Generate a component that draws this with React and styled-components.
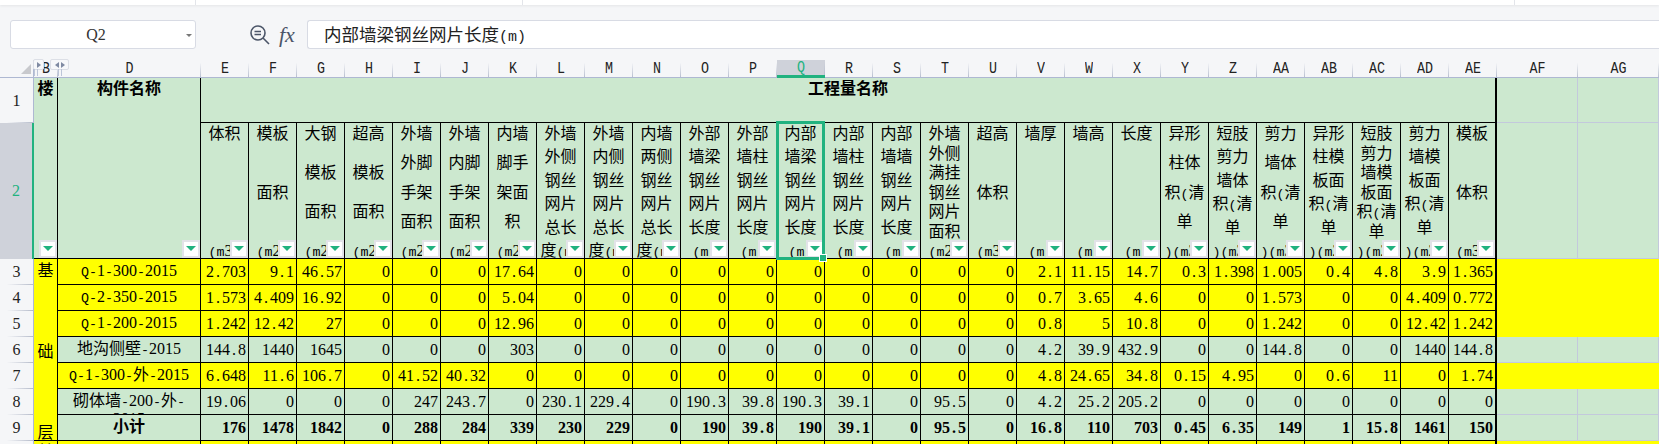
import React from 'react';
import styled, { createGlobalStyle } from 'styled-components';

const Global = createGlobalStyle`
    html, body {
        margin: 0;
        padding: 0;
        height: 444px;
        overflow: hidden;
        background: #f5f6f8;
    }
`;

const CJK = '"Noto Sans CJK SC", "Noto Sans", sans-serif';
const MONO = '"Liberation Mono", monospace';
const SERIF = '"Liberation Serif", serif';
const GREEN = '#cce8cf';
const ACTIVE = '#21b27f';

const Latin = styled.span`
    font: ${p => (p.$bold ? 700 : 400)} 13.33px/1 ${MONO};
`;
const Page = styled.div`
    width: 1659px;
    height: 444px;
    overflow: hidden;
`;
const TopStrip = styled.div`
    display: flex;
    height: 5px;
    background: #fff;
    box-shadow: 0 1px 3px rgba(0, 0, 0, 0.07);
`;
const Tick = styled.i`
    display: block;
    width: 1px;
    height: 5px;
    background: #e3e5ea;
    margin-left: ${p => p.$gap}px;
`;
const FormulaBar = styled.div`
    display: flex;
    align-items: center;
    height: 29px;
    padding: 15px 0 11px 10px;
`;
const NameBox = styled.div`
    position: relative;
    box-sizing: border-box;
    width: 186px;
    height: 29px;
    background: #fff;
    border: 1px solid #d8dbe4;
    border-radius: 3px;
    font: 16px/27px ${SERIF};
    color: #333;
    text-align: center;
    padding-right: 14px;
    &::after {
        content: '';
        position: absolute;
        right: 3px;
        top: 13px;
        border-left: 3px solid transparent;
        border-right: 3px solid transparent;
        border-top: 3px solid #777;
    }
`;
const BarIcons = styled.div`
    display: flex;
    align-items: center;
    width: 111px;
    padding-left: 54px;
    box-sizing: border-box;
    gap: 9px;
    color: #4b5568;
`;
const Fx = styled.span`
    font: italic 22px/28px ${SERIF};
`;
const FormulaInput = styled.div`
    flex: 1;
    box-sizing: border-box;
    height: 29px;
    background: #fff;
    border: 1px solid #d8dbe4;
    border-right: none;
    border-radius: 3px 0 0 3px;
    padding-left: 16px;
    font: 17.5px/26px ${CJK};
    color: #222;
    ${Latin} {
        font-size: 15px;
    }
`;

const Sheet = styled.table`
    border-collapse: separate;
    border-spacing: 0;
    table-layout: fixed;
    width: 1659px;
    font: 16px/18px ${CJK};
    color: #000;
`;
const Col = styled.col`
    width: ${p => p.$w}px;
`;
const Row = styled.tr`
    height: ${p => p.$h}px;
`;
const ColHead = styled.th`
    position: relative;
    height: 17px;
    padding: 0;
    background-color: ${p => (p.$active ? '#cfd2da' : '#f5f6f8')};
    background-image: linear-gradient(to bottom, transparent 15%, #b9c0d0);
    background-size: 1px 100%;
    background-position: right top;
    background-repeat: no-repeat;
    color: ${p => (p.$active ? ACTIVE : '#222')};
    border-bottom: ${p => (p.$active ? `3px solid ${ACTIVE}` : '1px solid #aeb8d2')};
    box-sizing: border-box;
    font: 400 13.33px/14px ${MONO};
`;
const ColLabel = styled.span`
    display: inline-block;
    vertical-align: top;
    font: 400 13.33px/15px ${MONO};
    transform: scaleY(1.18);
`;
const Corner = styled.th`
    position: relative;
    padding: 0;
    background: #f5f6f8;
    border-bottom: 1px solid #aeb8d2;
    border-right: 1px solid #aeb8d2;
    box-sizing: border-box;
    font: 400 13.33px/14px ${MONO};
    &::after {
        content: '';
        position: absolute;
        right: 2px;
        bottom: 3px;
        border-left: 10px solid transparent;
        border-bottom: 10px solid #c8c9cd;
    }
`;
const RowHead = styled.th`
    padding: 0;
    background-color: ${p => (p.$active ? '#cfd2da' : '#f5f6f8')};
    background-image: ${p => (p.$active ? 'none' : 'linear-gradient(to right, transparent 20%, #b6bccb)')};
    background-size: 100% 1px;
    background-position: left bottom;
    background-repeat: no-repeat;
    color: ${p => (p.$active ? ACTIVE : '#222')};
    border-right: ${p => (p.$active ? `2px solid ${ACTIVE}` : '1px solid #aeb8d2')};
    font: 400 16px/16px ${SERIF};
    box-sizing: border-box;
`;
const Cell = styled.td`
    position: relative;
    box-sizing: border-box;
    padding: 0;
    background: ${p => (p.$fill === 'yellow' ? '#ffff00' : GREEN)};
    border-right: ${p => (p.$thick ? '2px' : '1px')} solid #000;
    border-bottom: 1px solid #000;
    vertical-align: top;
    overflow: ${p => (p.$open ? 'visible' : 'hidden')};
`;
const Blank = styled.td`
    padding: 0;
    box-sizing: border-box;
    background: ${p => (p.$fill === 'yellow' ? '#ffff00' : GREEN)};
    border-right: 1px solid ${p => (p.$fill === 'yellow' ? '#ffff00' : '#c3c9dc')};
    border-bottom: 1px solid ${p => (p.$fill === 'yellow' ? '#ffff00' : '#c3c9dc')};
`;
const TopLabel = styled.div`
    font-weight: ${p => (p.$plain ? 400 : 700)};
    text-align: center;
    line-height: 18px;
    white-space: nowrap;
`;
const HeadStack = styled.div`
    display: flex;
    flex-direction: column;
    justify-content: space-between;
    align-items: center;
    height: 135px;
    white-space: nowrap;
    overflow: hidden;
`;
const HeadLine = styled.div`
    height: 18px;
    line-height: 18px;
    text-align: center;
`;
const Digits = styled.span`
    font: ${p => (p.$bold ? 700 : 400)} 16px/1 ${SERIF};
`;
const Dot = styled(Digits)`
    padding: 0 2px;
`;
const FilterBtn = styled.span`
    position: absolute;
    right: 0;
    bottom: 0;
    box-sizing: border-box;
    width: 18px;
    height: 18px;
    background: #fff;
    border: 2px solid #e2e3e8;
    z-index: 2;
    &::after {
        content: '';
        position: absolute;
        left: 2px;
        top: 4px;
        border-left: 5px solid transparent;
        border-right: 5px solid transparent;
        border-top: 5px solid ${ACTIVE};
    }
`;
const NameCell = styled.div`
    height: 25px;
    box-sizing: border-box;
    padding-top: 2px;
    overflow: hidden;
    text-align: center;
    font-size: 16px;
    font-weight: ${p => (p.$bold ? 700 : 400)};
    line-height: 17px;
`;
const Value = styled.div`
    height: 25px;
    box-sizing: border-box;
    padding: 2px 2px 0 0;
    overflow: hidden;
    text-align: right;
    line-height: 18px;
    white-space: nowrap;
`;
const FloorStack = styled.div`
    display: flex;
    flex-direction: column;
    justify-content: space-between;
    align-items: center;
    height: 181px;
    padding-top: 1px;
    box-sizing: border-box;
    line-height: 18px;
`;
const Selection = styled.div`
    position: absolute;
    left: -1px;
    top: -2px;
    right: -1px;
    bottom: -2px;
    border: 3px solid ${ACTIVE};
    pointer-events: none;
    z-index: 3;
    &::after {
        content: '';
        position: absolute;
        right: -5px;
        bottom: -5px;
        width: 6px;
        height: 6px;
        background: ${ACTIVE};
        border: 1px solid #fff;
    }
`;
const OutlineTab = styled.span`
    position: absolute;
    top: -1px;
    left: ${p => p.$left}px;
    display: flex;
    align-items: center;
    justify-content: center;
    gap: 2px;
    box-sizing: border-box;
    height: 11px;
    width: ${p => p.$width}px;
    background: #f7f8fa;
    border: 1px solid #dcdfe6;
    border-radius: 2px;
    z-index: 2;
    &::before,
    &::after {
        content: '';
        position: absolute;
        top: 100%;
        width: 1px;
        height: 7px;
        background: #bcc5d8;
    }
    &::before {
        left: ${p => p.$line}px;
    }
    &::after {
        left: ${p => p.$line + 3}px;
    }
`;
const Arrow = styled.i`
    display: block;
    border-top: 3px solid transparent;
    border-bottom: 3px solid transparent;
    ${p => (p.$dir === 'left' ? 'border-right' : 'border-left')}: 4px solid #7f8aa2;
`;

const cols = ['E','F','G','H','I','J','K','L','M','N','O','P','Q','R','S','T','U','V','W','X','Y','Z','AA','AB','AC','AD','AE'];

const heads = [
    ['体积','(m3)'],
    ['模板','面积','(m2)'],
    ['大钢','模板','面积','(m2)'],
    ['超高','模板','面积','(m2)'],
    ['外墙','外脚','手架','面积','(m2)'],
    ['外墙','内脚','手架','面积','(m2)'],
    ['内墙','脚手','架面','积','(m2)'],
    ['外墙','外侧','钢丝','网片','总长','度(m)'],
    ['外墙','内侧','钢丝','网片','总长','度(m)'],
    ['内墙','两侧','钢丝','网片','总长','度(m)'],
    ['外部','墙梁','钢丝','网片','长度','(m)'],
    ['外部','墙柱','钢丝','网片','长度','(m)'],
    ['内部','墙梁','钢丝','网片','长度','(m)'],
    ['内部','墙柱','钢丝','网片','长度','(m)'],
    ['内部','墙墙','钢丝','网片','长度','(m)'],
    ['外墙','外侧','满挂','钢丝','网片','面积','(m2)'],
    ['超高','体积','(m3)'],
    ['墙厚','(m)'],
    ['墙高','(m)'],
    ['长度','(m)'],
    ['异形','柱体','积(清','单',')(m3)'],
    ['短肢','剪力','墙体','积(清','单',')(m3)'],
    ['剪力','墙体','积(清','单',')(m3)'],
    ['异形','柱模','板面','积(清','单',')(m2)'],
    ['短肢','剪力','墙模','板面','积(清','单',')(m2)'],
    ['剪力','墙模','板面','积(清','单',')(m2)'],
    ['模板','体积','(m3)'],
];

const Z10 = Array(10).fill('0');

const rows = [
    { n: 3, fill: 'yellow', name: 'Q-1-300-2015', vals: ['2.703','9.1','46.57','0','0','0','17.64',...Z10,'2.1','11.15','14.7','0.3','1.398','1.005','0.4','4.8','3.9','1.365'] },
    { n: 4, fill: 'yellow', name: 'Q-2-350-2015', vals: ['1.573','4.409','16.92','0','0','0','5.04',...Z10,'0.7','3.65','4.6','0','0','1.573','0','0','4.409','0.772'] },
    { n: 5, fill: 'yellow', name: 'Q-1-200-2015', vals: ['1.242','12.42','27','0','0','0','12.96',...Z10,'0.8','5','10.8','0','0','1.242','0','0','12.42','1.242'] },
    { n: 6, fill: 'green', name: '地沟侧壁-2015', vals: ['144.8','1440','1645','0','0','0','303',...Z10,'4.2','39.9','432.9','0','0','144.8','0','0','1440','144.8'] },
    { n: 7, fill: 'yellow', name: 'Q-1-300-外-2015', vals: ['6.648','11.6','106.7','0','41.52','40.32','0',...Z10,'4.8','24.65','34.8','0.15','4.95','0','0.6','11','0','1.74'] },
    { n: 8, fill: 'green', name: '砌体墙-200-外-\n2015', vals: ['19.06','0','0','0','247','243.7','0','230.1','229.4','0','190.3','39.8','190.3','39.1','0','95.5','0','4.2','25.2','205.2','0','0','0','0','0','0','0'] },
    { n: 9, fill: 'green', bold: true, name: '小计', vals: ['176','1478','1842','0','288','284','339','230','229','0','190','39.8','190','39.1','0','95.5','0','16.8','110','703','0.45','6.35','149','1','15.8','1461','150'] },
];

// the sheet is in SimSun, so every latin char has to come out half the CJK width
function Mixed({ text, bold }) {
    const parts = text.match(/\n|[0-9]+|\.|[\x20-\x7f]|[^\x00-\x7f]+/g) || [];
    return parts.map((part, i) => {
        if (part === '\n') return <br key={i} />;
        if (part === '.') return <Dot key={i} $bold={bold}>.</Dot>;
        if (/^[0-9]/.test(part)) return <Digits key={i} $bold={bold}>{part}</Digits>;
        if (/^[\x20-\x7f]/.test(part)) return <Latin key={i} $bold={bold}>{part}</Latin>;
        return <span key={i}>{part}</span>;
    });
}

function ZoomIcon() {
    return (
        <svg width="20" height="20" viewBox="0 0 20 20" fill="none" stroke="currentColor" strokeWidth="1.6">
            <circle cx="8" cy="8" r="7" />
            <path d="M13 13L19 19" />
            <path d="M4.5 6.5h6.5M4.5 9.5h6.5" strokeWidth="1.3" />
        </svg>
    );
}

export default function App() {
    return (
        <Page>
            <Global />
            <TopStrip>
                <Tick $gap={195} />
                <Tick $gap={326} />
                <Tick $gap={991} />
            </TopStrip>
            <FormulaBar>
                <NameBox>Q2</NameBox>
                <BarIcons>
                    <ZoomIcon />
                    <Fx>fx</Fx>
                </BarIcons>
                <FormulaInput><Mixed text="内部墙梁钢丝网片长度(m)" /></FormulaInput>
            </FormulaBar>
            <Sheet>
                <colgroup>
                    <Col $w={34} />
                    <Col $w={24} />
                    <Col $w={143} />
                    {cols.map(c => <Col key={c} $w={48} />)}
                    <Col $w={81} />
                    <Col $w={81} />
                </colgroup>
                <tbody>
                    <tr>
                        <Corner />
                        <ColHead>
                            <ColLabel>B</ColLabel>
                            <OutlineTab $left={-1} $width={11} $line={0}><Arrow /></OutlineTab>
                            <OutlineTab $left={16} $width={19} $line={7}><Arrow $dir="left" /><Arrow /></OutlineTab>
                        </ColHead>
                        <ColHead><ColLabel>D</ColLabel></ColHead>
                        {cols.map(c => <ColHead key={c} $active={c === 'Q'}><ColLabel>{c}</ColLabel></ColHead>)}
                        <ColHead><ColLabel>AF</ColLabel></ColHead>
                        <ColHead><ColLabel>AG</ColLabel></ColHead>
                    </tr>
                    <Row $h={45}>
                        <RowHead>1</RowHead>
                        <Cell rowSpan={2}>
                            <TopLabel>楼</TopLabel>
                            <FilterBtn />
                        </Cell>
                        <Cell rowSpan={2}>
                            <TopLabel>构件名称</TopLabel>
                            <FilterBtn />
                        </Cell>
                        <Cell colSpan={27} $thick><TopLabel>工程量名称</TopLabel></Cell>
                        <Blank />
                        <Blank />
                    </Row>
                    <Row $h={136}>
                        <RowHead $active>2</RowHead>
                        {heads.map((lines, i) => (
                            <Cell key={cols[i]} $thick={cols[i] === 'AE'} $open={cols[i] === 'Q'}>
                                <HeadStack>
                                    {lines.map((line, j) => <HeadLine key={j}><Mixed text={line} /></HeadLine>)}
                                </HeadStack>
                                <FilterBtn />
                                {cols[i] === 'Q' && <Selection />}
                            </Cell>
                        ))}
                        <Blank />
                        <Blank />
                    </Row>
                    {rows.map(row => (
                        <Row key={row.n} $h={26}>
                            <RowHead>{row.n}</RowHead>
                            {row.n === 3 && (
                                <Cell rowSpan={7} $fill="yellow">
                                    <FloorStack>
                                        <span>基</span>
                                        <span>础</span>
                                        <span>层</span>
                                    </FloorStack>
                                </Cell>
                            )}
                            <Cell $fill={row.fill}>
                                <NameCell $bold={row.bold}><Mixed text={row.name} bold={row.bold} /></NameCell>
                            </Cell>
                            {row.vals.map((v, i) => (
                                <Cell key={cols[i]} $fill={row.fill} $thick={cols[i] === 'AE'}>
                                    <Value><Mixed text={v} bold={row.bold} /></Value>
                                </Cell>
                            ))}
                            <Blank $fill={row.fill} />
                            <Blank $fill={row.fill} />
                        </Row>
                    ))}
                    <Row $h={26}>
                        <RowHead>10</RowHead>
                        <Cell $fill="yellow"><TopLabel $plain>首</TopLabel></Cell>
                        <Cell $fill="yellow" />
                        {cols.map(c => <Cell key={c} $fill="yellow" $thick={c === 'AE'} />)}
                        <Blank $fill="yellow" />
                        <Blank $fill="yellow" />
                    </Row>
                </tbody>
            </Sheet>
        </Page>
    );
}
